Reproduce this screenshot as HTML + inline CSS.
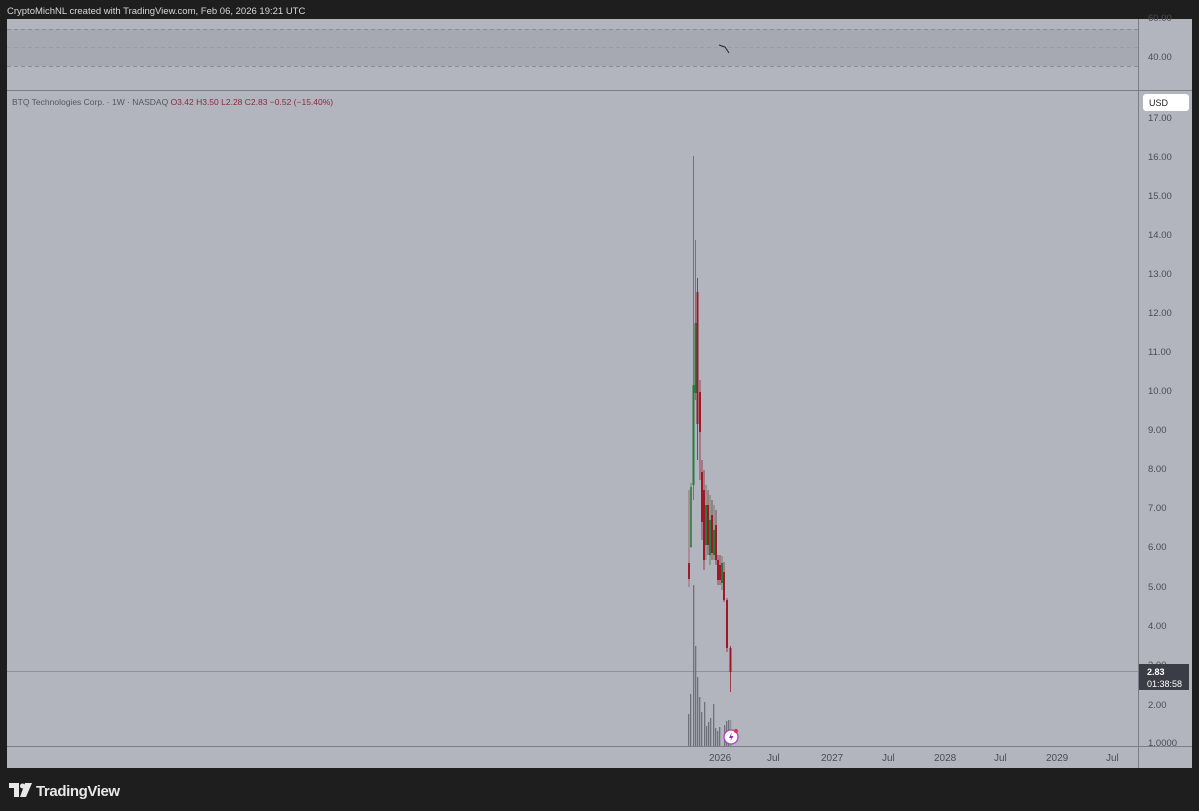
<!DOCTYPE html>
<html><head><meta charset="utf-8"><style>
html,body{margin:0;padding:0;background:#1e1e1e;width:1199px;height:811px;overflow:hidden;font-family:"Liberation Sans",sans-serif}
svg{position:absolute;left:0;top:0}
</style></head><body>
<svg width="1199" height="811" viewBox="0 0 1199 811" font-family="Liberation Sans, sans-serif">
<rect width="1199" height="811" fill="#1e1e1e"/>
<text x="7" y="14" fill="#d8d8d8" font-size="9.5">CryptoMichNL created with TradingView.com, Feb 06, 2026 19:21 UTC</text>
<rect x="7" y="19" width="1185" height="749" fill="#b2b5be"/>
<rect x="7" y="29" width="1131" height="37" fill="#a6a9b1"/>
<line x1="7" y1="29.5" x2="1138" y2="29.5" stroke="#8b8e96" stroke-dasharray="4 3"/>
<line x1="7" y1="47.5" x2="1138" y2="47.5" stroke="#9a9da5" stroke-dasharray="4 3"/>
<line x1="7" y1="66.5" x2="1138" y2="66.5" stroke="#8b8e96" stroke-dasharray="4 3"/>
<polyline points="719,45 725,47 729,53" fill="none" stroke="#222" stroke-width="1"/>
<line x1="7" y1="90.5" x2="1192" y2="90.5" stroke="#7b7e86"/>
<line x1="1138.5" y1="19" x2="1138.5" y2="768" stroke="#7b7e86"/>
<line x1="7" y1="746.5" x2="1192" y2="746.5" stroke="#7b7e86"/>
<g fill="#4a4d55" font-size="9.5">
<text x="1148" y="21">60.00</text>
<text x="1148" y="60">40.00</text>
<text x="1148" y="121">17.00</text>
<text x="1148" y="160">16.00</text>
<text x="1148" y="199">15.00</text>
<text x="1148" y="238">14.00</text>
<text x="1148" y="277">13.00</text>
<text x="1148" y="316">12.00</text>
<text x="1148" y="355">11.00</text>
<text x="1148" y="394">10.00</text>
<text x="1148" y="433">9.00</text>
<text x="1148" y="472">8.00</text>
<text x="1148" y="511">7.00</text>
<text x="1148" y="550">6.00</text>
<text x="1148" y="590">5.00</text>
<text x="1148" y="629">4.00</text>
<text x="1148" y="668">3.00</text>
<text x="1148" y="708">2.00</text>
<text x="1148" y="746">1.0000</text>
</g>
<rect x="1143" y="94" width="46" height="17" rx="3" fill="#fff"/>
<text x="1149" y="106" fill="#222" font-size="9">USD</text>
<text x="12" y="105" fill="#555860" font-size="8.5">BTQ Technologies Corp. · 1W · NASDAQ <tspan fill="#8c2a3a">O3.42 H3.50 L2.28 C2.83 −0.52 (−15.40%)</tspan></text>
<line x1="7" y1="671.5" x2="1138" y2="671.5" stroke="#858891" stroke-width="0.8"/>
<rect x="1139" y="664" width="50" height="26" fill="#3a3d45"/>
<text x="1147" y="675" fill="#fff" font-size="9" font-weight="bold">2.83</text>
<text x="1147" y="687" fill="#fff" font-size="9">01:38:58</text>
<g fill="#4a4d55" font-size="10">
<text x="709" y="761">2026</text>
<text x="767" y="761">Jul</text>
<text x="821" y="761">2027</text>
<text x="882" y="761">Jul</text>
<text x="934" y="761">2028</text>
<text x="994" y="761">Jul</text>
<text x="1046" y="761">2029</text>
<text x="1106" y="761">Jul</text>
</g>
<g fill="#6e7178">
<rect x="688" y="714" width="1.3" height="32"/>
<rect x="690" y="694" width="1.3" height="52"/>
<rect x="693" y="585" width="1.3" height="161"/>
<rect x="695" y="646" width="1.3" height="100"/>
<rect x="697" y="677" width="1.3" height="69"/>
<rect x="699" y="697" width="1.3" height="49"/>
<rect x="701" y="712" width="1.3" height="34"/>
<rect x="704" y="702" width="1.3" height="44"/>
<rect x="706" y="726" width="1.3" height="20"/>
<rect x="708" y="722" width="1.3" height="24"/>
<rect x="710" y="718" width="1.3" height="28"/>
<rect x="713" y="704" width="1.3" height="42"/>
<rect x="715" y="728" width="1.3" height="18"/>
<rect x="717" y="731" width="1.3" height="15"/>
<rect x="719" y="727" width="1.3" height="19"/>
<rect x="724" y="725" width="1.3" height="21"/>
<rect x="726" y="721" width="1.3" height="25"/>
<rect x="728" y="720" width="1.3" height="26"/>
<rect x="730" y="720" width="1.3" height="26" fill="#8e9198"/>
</g>
<g stroke-width="0.8">
<line x1="689" y1="490" x2="689" y2="587" stroke="#a05060"/><rect x="688" y="563" width="2" height="16" fill="#9b1c2c"/>
<line x1="691" y1="483" x2="691" y2="548" stroke="#508060"/><rect x="690" y="487" width="2" height="60" fill="#3e8a50"/>
<line x1="693.5" y1="156" x2="693.5" y2="500" stroke="#3f7a50"/><rect x="692.5" y="385" width="2" height="100" fill="#267a3c"/>
<line x1="695.5" y1="240" x2="695.5" y2="400" stroke="#3f7a50"/><rect x="694.5" y="323" width="2" height="70" fill="#267a3c"/>
<line x1="697.5" y1="278" x2="697.5" y2="460" stroke="#902030"/><rect x="696.5" y="292" width="2" height="132" fill="#a01828"/>
<line x1="700" y1="380" x2="700" y2="480" stroke="#902030"/><rect x="699" y="392" width="2" height="40" fill="#a01828"/>
<line x1="702" y1="460" x2="702" y2="540" stroke="#902030"/><rect x="701" y="472" width="2" height="50" fill="#a01828"/>
<line x1="704" y1="470" x2="704" y2="570" stroke="#902030"/><rect x="703" y="490" width="2" height="70" fill="#a01828"/>
<line x1="706" y1="485" x2="706" y2="560" stroke="#3f7a50"/><rect x="705" y="505" width="2" height="40" fill="#267a3c"/>
<line x1="708" y1="490" x2="708" y2="555" stroke="#902030"/><rect x="707" y="505" width="2" height="40" fill="#a01828"/>
<line x1="710" y1="495" x2="710" y2="565" stroke="#3f7a50"/><rect x="709" y="520" width="2" height="35" fill="#267a3c"/>
<line x1="712" y1="500" x2="712" y2="560" stroke="#902030"/><rect x="711" y="515" width="2" height="38" fill="#a01828"/>
<line x1="714" y1="505" x2="714" y2="560" stroke="#3f7a50"/><rect x="713" y="530" width="2" height="25" fill="#267a3c"/>
<line x1="716" y1="510" x2="716" y2="565" stroke="#902030"/><rect x="715" y="525" width="2" height="35" fill="#a01828"/>
<line x1="718" y1="555" x2="718" y2="585" stroke="#902030"/><rect x="717" y="560" width="2" height="20" fill="#a01828"/>
<line x1="720" y1="555" x2="720" y2="585" stroke="#902030"/><rect x="719" y="565" width="2" height="15" fill="#a01828"/>
<line x1="722" y1="556" x2="722" y2="590" stroke="#3f7a50"/><rect x="721" y="563" width="2" height="20" fill="#267a3c"/>
<line x1="724" y1="562" x2="724" y2="602" stroke="#902030"/><rect x="723" y="572" width="2" height="28" fill="#a01828"/>
<line x1="727" y1="598" x2="727" y2="652" stroke="#902030"/><rect x="726" y="600" width="2" height="48" fill="#a01828"/>
<line x1="730.5" y1="646" x2="730.5" y2="692" stroke="#902030"/><rect x="729.5" y="648" width="2" height="24" fill="#a01828"/>
</g>
<circle cx="731" cy="737" r="7" fill="#fff" stroke="#b040c0" stroke-width="1.3"/>
<path d="M732 732 L729 738 L731.5 738 L730 742 L733.5 736 L731 736 Z" fill="#9030b0"/>
<circle cx="736" cy="731" r="2" fill="#e03040"/>
<g fill="#e8e8e8">
<path d="M9 783 H19 V797 H14 V788 H9 Z"/>
<circle cx="22.5" cy="786" r="2.5"/>
<path d="M25 783 H32 L26 797 H20 Z"/>
</g>
<text x="36" y="796" fill="#e8e8e8" font-size="15" font-weight="bold" letter-spacing="-0.4">TradingView</text>
</svg>
</body></html>
